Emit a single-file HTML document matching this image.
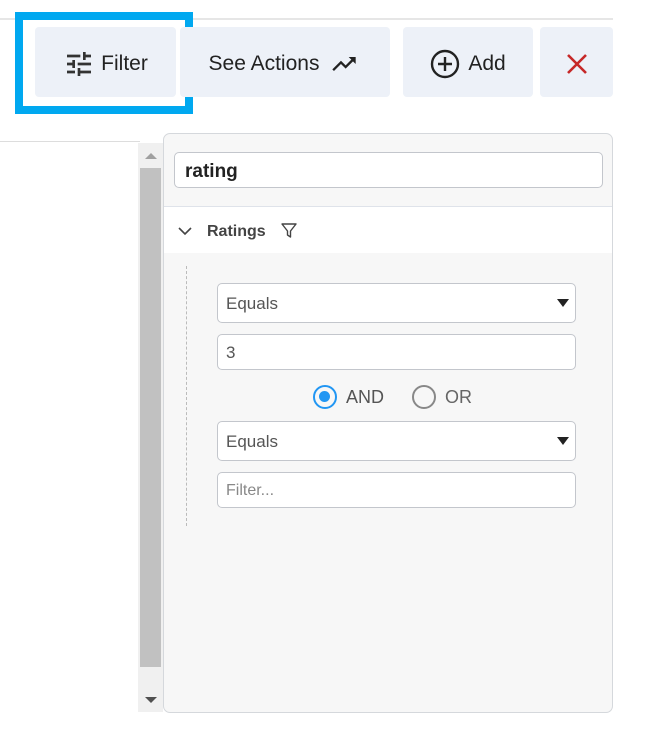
<!DOCTYPE html>
<html><head><style>
*{box-sizing:border-box;margin:0;padding:0}
body{width:657px;height:742px;background:#fff;position:relative;overflow:hidden;font-family:"Liberation Sans",sans-serif;color:#222}
.a{position:absolute}
.btn{position:absolute;top:27px;height:70px;background:#edf1f8;border-radius:4px;display:flex;align-items:center;justify-content:center;font-size:21px;color:#222;padding-top:4px}
.inp{position:absolute;left:217px;width:359px;background:#fff;border:1px solid #c3c6cc;border-radius:5px;font-size:17px;color:#555;padding-left:8px;display:flex;align-items:center;padding-top:2px}
.tri{position:absolute;right:6px;top:50%;margin-top:-4px;width:0;height:0;border-left:6px solid transparent;border-right:6px solid transparent;border-top:8px solid #222}
</style></head><body>
<div class="a" style="left:0;top:18px;width:613px;height:2px;background:#e6e6e6"></div>
<div class="btn" style="left:35px;width:141px"><svg width="32" height="32" viewBox="0 0 24 24" style="margin-right:6px"><path d="M3 17v2h6v-2H3zM3 5v2h10V5H3zm10 16v-2h8v-2h-8v-2h-2v6h2zM7 9v2H3v2h4v2h2V9H7zm14 4v-2H11v2h10zm-6-4h2V7h4V5h-4V3h-2v6z" fill="#333"/></svg>Filter</div>
<div class="a" style="left:15px;top:12px;width:178px;height:102px;border:8px solid #00a8f0"></div>
<div class="btn" style="left:180px;width:210px">See Actions<svg width="34" height="28" viewBox="0 0 24 24" style="margin-left:8px"><path d="M16 6l2.29 2.29-4.88 4.88-4-4L2 16.59 3.41 18l6-6 4 4 6.3-6.29L22 12V6z" fill="#222"/></svg></div>
<div class="btn" style="left:403px;width:130px"><svg width="30" height="30" viewBox="0 0 30 30" style="margin-right:8px"><circle cx="15" cy="15" r="13" fill="none" stroke="#222" stroke-width="2.4"/><path d="M15 8v14M8 15h14" stroke="#222" stroke-width="2.4"/></svg>Add</div>
<div class="btn" style="left:540px;width:73px"><svg width="22" height="22" viewBox="0 0 22 22"><path d="M2 2l18 18M20 2L2 20" stroke="#c62828" stroke-width="2.6"/></svg></div>
<div class="a" style="left:0;top:141px;width:140px;height:1px;background:#ddd"></div>
<div class="a" style="left:138px;top:143px;width:25px;height:569px;background:#f0f0f0"></div>
<div class="a" style="left:140px;top:168px;width:21px;height:499px;background:#c1c1c1"></div>
<div class="a" style="left:145px;top:153px;border-left:6px solid transparent;border-right:6px solid transparent;border-bottom:6px solid #a0a0a0"></div>
<div class="a" style="left:145px;top:697px;border-left:6px solid transparent;border-right:6px solid transparent;border-top:6px solid #505050"></div>
<div class="a" style="left:163px;top:133px;width:450px;height:580px;background:#f7f7f7;border:1px solid #d5d8dc;border-radius:7px"></div>
<div class="a" style="left:174px;top:152px;width:429px;height:36px;background:#fff;border:1px solid #c3c6cc;border-radius:5px;font-weight:bold;font-size:19px;padding-left:10px;line-height:38px;color:#222">rating</div>
<div class="a" style="left:164px;top:206px;width:448px;height:1px;background:#dfe3ea"></div>
<div class="a" style="left:164px;top:207px;width:448px;height:46px;background:#fff"></div>
<svg class="a" style="left:177px;top:225px" width="16" height="12" viewBox="0 0 16 12"><path d="M2 3l6 6 6-6" fill="none" stroke="#444" stroke-width="1.6"/></svg>
<div class="a" style="left:207px;top:223px;font-size:16px;font-weight:bold;color:#444">Ratings</div>
<svg class="a" style="left:280px;top:222px" width="18" height="18" viewBox="0 0 18 18"><path d="M2 2h14l-5.5 7v6l-3-2V9z" fill="none" stroke="#444" stroke-width="1.4" stroke-linejoin="round"/></svg>
<div class="a" style="left:186px;top:266px;height:260px;border-left:1px dashed #bbb"></div>
<div class="inp" style="top:283px;height:40px">Equals<div class="tri"></div></div>
<div class="inp" style="top:334px;height:36px">3</div>
<div class="a" style="left:313px;top:385px;width:24px;height:24px;border:2.5px solid #2196f3;border-radius:50%"><div style="margin:4px;width:11px;height:11px;background:#2196f3;border-radius:50%"></div></div>
<div class="a" style="left:346px;top:387px;font-size:18px;color:#555">AND</div>
<div class="a" style="left:412px;top:385px;width:24px;height:24px;border:2.5px solid #888;border-radius:50%"></div>
<div class="a" style="left:445px;top:387px;font-size:18px;color:#666">OR</div>
<div class="inp" style="top:421px;height:40px">Equals<div class="tri"></div></div>
<div class="inp" style="top:472px;height:36px;color:#888;font-size:16px">Filter...</div>
</body></html>
